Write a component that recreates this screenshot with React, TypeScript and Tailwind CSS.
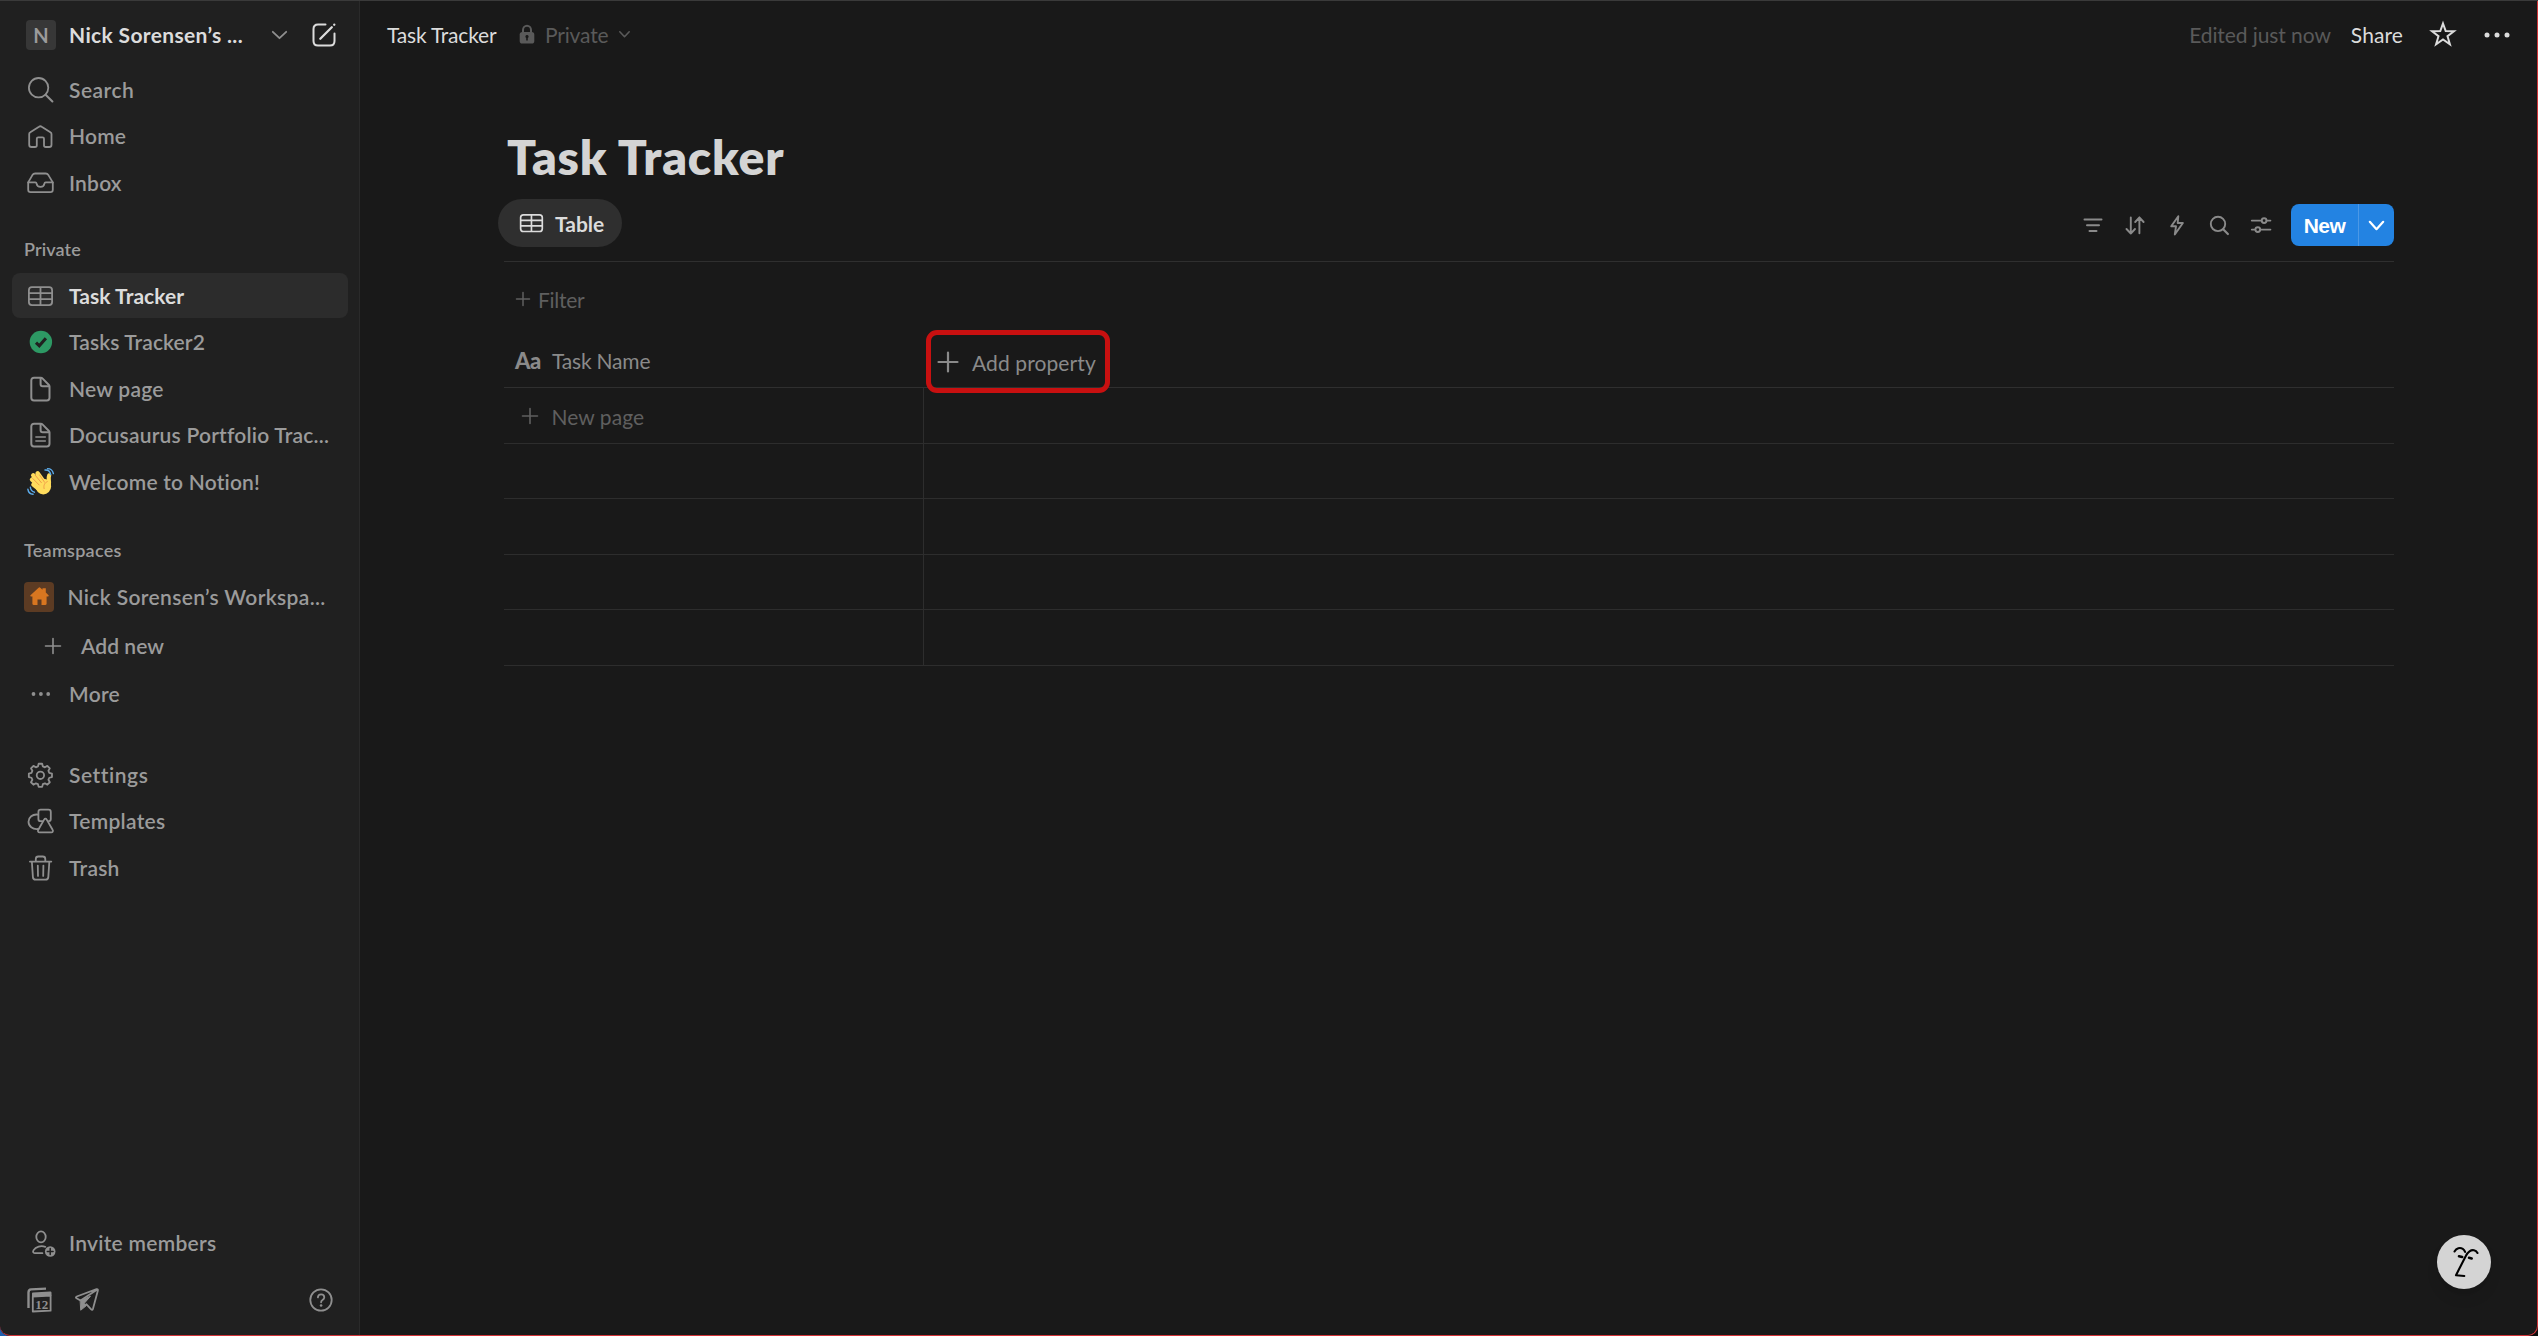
import React from "react";

type IconProps = { w?: number; h?: number; s?: number; className?: string; children: React.ReactNode };

function Icon({ w = 30, h = 30, s = 1.8, className = "", children }: IconProps) {
  return (
    <svg
      width={w}
      height={h}
      viewBox={`0 0 ${w} ${h}`}
      fill="none"
      stroke="currentColor"
      strokeWidth={s}
      strokeLinecap="round"
      strokeLinejoin="round"
      className={`block shrink-0 overflow-visible ${className}`}
    >
      {children}
    </svg>
  );
}

const SearchIcon = () => (
  <Icon>
    <circle cx="13.6" cy="12.7" r="9.7" />
    <path d="M20.6 19.8 27.4 26.4" strokeWidth="2.1" />
  </Icon>
);

const HomeIcon = () => (
  <Icon>
    <path d="M4.2 13.1c0-.9.4-1.5 1.1-1.9L14 5.7c.9-.6 1.8-.6 2.7 0l8.7 5.5c.7.4 1.1 1 1.1 1.9v10.6c0 1.4-.9 2.3-2.3 2.3h-3.4c-1.1 0-1.8-.7-1.8-1.8v-6.4c0-.9-.5-1.4-1.4-1.4h-4.4c-.9 0-1.4.5-1.4 1.4v6.4c0 1.1-.7 1.8-1.8 1.8H6.5c-1.4 0-2.3-.9-2.3-2.3z" />
  </Icon>
);

const InboxIcon = () => (
  <Icon>
    <path d="M3.2 14.4 7.4 7.1c.7-1.1 1.5-1.6 2.7-1.6h10.6c1.2 0 2 .5 2.7 1.6l4.4 7.3v7.4c0 1.4-1 2.4-2.4 2.4H5.6c-1.4 0-2.4-1-2.4-2.4z" />
    <path d="M3.2 14.4h7.1c.8 0 1.2.4 1.3 1.2.3 2 1.8 3.3 3.9 3.3s3.6-1.3 3.9-3.3c.1-.8.5-1.2 1.3-1.2h7.1" />
  </Icon>
);

const TableIcon = ({ w = 30, h = 30 }: { w?: number; h?: number }) => (
  <svg width={w} height={h} viewBox="0 0 30 30" fill="none" stroke="currentColor" strokeWidth="1.8" className="block shrink-0">
    <rect x="3.9" y="6.2" width="23.2" height="17.9" rx="3" />
    <path d="M4 12.2h23M4 18.1h23M15.5 6.4V24" />
  </svg>
);

const CheckIcon = () => (
  <Icon s={3.1} className="text-[#202020]">
    <circle cx="15.9" cy="15" r="11.2" fill="#2d9964" stroke="none" />
    <path d="m11 15.6 3.3 3.2 6.6-7.6" strokeLinecap="butt" strokeLinejoin="miter" />
  </Icon>
);

const PageIcon = ({ lines = false }: { lines?: boolean }) => (
  <Icon s={2}>
    <path d="M9 3.8h6.7c.8 0 1.4.2 2 .8l6 6.2c.6.6.8 1.1.8 1.9v11c0 1.7-1 2.7-2.7 2.7H9c-1.7 0-2.7-1-2.7-2.7V6.5c0-1.7 1-2.7 2.7-2.7z" />
    <path d="M15.6 4v6.2c0 1.3.7 2 2 2h6.6" />
    {lines && <path d="M10.900 17h9.400M10.900 21h9.400" strokeWidth="1.600" />}
  </Icon>
);

const WaveIcon = () => (
  <Icon>
    <g stroke="#ffdc5d" strokeWidth="4.4">
      <path d="M8.4 17.6 14 22M7 12.6l8 7M8.2 8.3l8.4 9M12.6 6.4l7.2 10" />
      <path d="M24.2 8.4c-1 2-.3 4.5-.2 7.2 0 4-1.8 7-4.4 8.4" strokeWidth="4.2" />
    </g>
    <circle cx="18.3" cy="19.6" r="7.8" fill="#ffdc5d" stroke="none" />
    <g stroke="#ee9547" strokeWidth="0.9">
      <path d="m7.7 11.5 6.5 6.5M10.2 8.2l6.2 7.5M14.6 8l5 7.3" />
      <path d="M22.3 14.6c-2.7 1.2-4 3.8-3.2 7" />
    </g>
    <g stroke="#5dadec" strokeWidth="1.4">
      <path d="M20 3c3-.2 5.2 1.7 5.7 4.6M22.5 1.6c3 0 5.3 2.1 5.9 5" />
      <path d="M5.4 20.2c.2 2.4 1.7 4.3 4 5M2.9 22.3c.4 2.8 2.3 4.7 5.2 5" />
    </g>
  </Icon>
);

const gearPath = (() => {
  const pts: string[] = [];
  const teeth = 8;
  for (let i = 0; i < teeth; i++) {
    const base = (i * 2 * Math.PI) / teeth - Math.PI / 2;
    [
      [-0.27, 9.2],
      [-0.15, 11.7],
      [0.15, 11.7],
      [0.27, 9.2],
    ].forEach(([da, r]) => {
      pts.push(`${(15.4 + r * Math.cos(base + da)).toFixed(2)} ${(15.3 + r * Math.sin(base + da)).toFixed(2)}`);
    });
  }
  return `M${pts.join("L")}Z`;
})();

const GearIcon = () => (
  <Icon>
    <path d={gearPath} />
    <circle cx="15.4" cy="15.3" r="3.7" />
  </Icon>
);

const TemplatesIcon = () => (
  <Icon>
    <path d="M12.8 8.6c-5.2-.7-9.3 2.8-9.3 7.2 0 4.3 4.1 7.9 9.6 7.2" />
    <path d="M17.4 15.2h-1.7c-1.5 0-2.3-.8-2.3-2.3V6c0-1.5.8-2.3 2.3-2.3h7.8c1.5 0 2.3.8 2.3 2.3v6.9c0 1.5-.6 2.1-1.9 2.3" />
    <path d="M19.1 13.6c.7-1.2 1.9-1.2 2.6 0l5.9 10.2c.8 1.3.2 2.5-1.3 2.5H14.6c-1.5 0-2.1-1.2-1.3-2.5z" />
  </Icon>
);

const TrashIcon = () => (
  <Icon>
    <path d="M4.9 8.6h21.4M6.9 9.2l1 14.9c.1 1.6 1.1 2.6 2.8 2.6h9.8c1.7 0 2.7-1 2.8-2.6l1-14.9M10.8 8.2V6c0-1.6.9-2.5 2.5-2.5h4.5c1.6 0 2.5.9 2.5 2.5v2.2" />
    <path d="m12.8 12.6.2 10.3M18.4 12.6l-.2 10.3" />
  </Icon>
);

const InviteIcon = () => (
  <Icon>
    <ellipse cx="16" cy="8.9" rx="4.7" ry="5.5" />
    <path d="M20.3 18.8c-4.3-1.5-9.5-.3-11.7 3.3-1 1.7-.5 3.1 1.2 3.1h7.6" />
    <circle cx="25.2" cy="23.5" r="5.3" fill="currentColor" stroke="none" />
    <path d="M25.2 20.6v5.8M22.3 23.5h5.800" stroke="#202020" strokeWidth="1.5" />
  </Icon>
);

const Plus = ({ size, s = 1.6 }: { size: number; s?: number }) => (
  <Icon w={size} h={size} s={s}>
    <path d={`M${size / 2} 0.5V${size - 0.5}M0.5 ${size / 2}H${size - 0.5}`} />
  </Icon>
);

const Chevron = ({ w, h, s = 1.8 }: { w: number; h: number; s?: number }) => (
  <Icon w={w} h={h} s={s}>
    <path d={`M0.8 0.8 ${w / 2} ${h - 0.8} ${w - 0.8} 0.8`} />
  </Icon>
);

function Row({
  icon,
  children,
  active = false,
  text,
}: {
  icon: React.ReactNode;
  children: React.ReactNode;
  active?: boolean;
  text: string;
}) {
  return (
    <div
      className={`ml-3 mr-[11px] flex h-[45px] items-center rounded-lg pl-[13px] ${active ? "bg-[#2c2c2c]" : ""}`}
    >
      <span className="text-[#8f8f8f]">{icon}</span>
      <span
        className={`ml-[14px] whitespace-nowrap pb-px text-[21px] leading-none ${
          active ? "font-bold text-[#dcdcdc]" : "font-semibold text-[#9b9b9b]"
        } ${text}`}
      >
        {children}
      </span>
    </div>
  );
}

function Sidebar() {
  return (
    <aside className="flex w-[360px] shrink-0 flex-col border-r border-[#2a2a2a] bg-[#202020]">
      <div className="mt-[11px] flex h-12 items-center pl-[26px]">
        <div className="flex h-[30px] w-[30px] items-center justify-center rounded bg-[#373737] text-[20px] font-bold text-[#9b9b9b]">
          N
        </div>
        <span className="ml-[13px] w-[190px] whitespace-nowrap pb-px text-[21px] font-bold leading-none tracking-[0.35px] text-[#dcdcdc]">
          Nick Sorensen’s ...
        </span>
        <span className="ml-[12.5px] text-[#8f8f8f]">
          <Chevron w={15} h={8} />
        </span>
        <span className="ml-[25.5px] text-[#dcdcdc]">
          <Icon w={24} h={24} s={2}>
            <path d="M13.5 1.5H6c-2.900 0-4.500 1.600-4.500 4.500v12c0 2.900 1.600 4.500 4.500 4.500h12c2.900 0 4.500-1.600 4.500-4.500v-7.500" />
            <path d="M8.300 15.700 19.800 4.200M22.200 1.700l.1-.1" strokeWidth="2.300" />
          </Icon>
        </span>
      </div>

      <nav className="mt-2 flex flex-col gap-[1.5px]">
        <Row icon={<SearchIcon />} text="tracking-[0.5px]">Search</Row>
        <Row icon={<HomeIcon />} text="tracking-[0.2px]">Home</Row>
        <Row icon={<InboxIcon />} text="tracking-[0.2px]">Inbox</Row>
      </nav>

      <div className="mt-[35px] flex h-[18px] items-center pl-6 text-[18px] font-semibold leading-none tracking-[0.1px] text-[#9b9b9b]">
        Private
      </div>
      <nav className="mt-[15px] flex flex-col gap-[1.5px]">
        <Row icon={<TableIcon />} active text="tracking-[0.05px]">Task Tracker</Row>
        <Row icon={<CheckIcon />} text="tracking-[0.1px]">Tasks Tracker2</Row>
        <Row icon={<PageIcon />} text="tracking-[0.25px]">New page</Row>
        <Row icon={<PageIcon lines />} text="tracking-[0.21px]">Docusaurus Portfolio Trac...</Row>
        <Row icon={<WaveIcon />} text="tracking-[0.2px]">Welcome to Notion!</Row>
      </nav>

      <div className="mt-[37px] flex h-[18px] items-center pl-6 text-[18px] font-semibold leading-none tracking-[0.25px] text-[#9b9b9b]">
        Teamspaces
      </div>
      <div className="mt-[15px] flex h-[45px] items-center pl-6">
        <div className="flex h-[30px] w-[30px] justify-center rounded bg-[#5c3b23] pt-[5px] text-[#d87620]">
          <svg width="19" height="18" viewBox="0 0 19 18" fill="currentColor" className="block">
            <path d="M8.6.7a1.300 1.300 0 0 1 1.700 0l2.200 2V1.200h3.300v4.400l2.700 2.600c.5.500.2 1.300-.5 1.300h-1.400v7.300c0 .7-.4 1.200-1.200 1.200h-3.900v-5.500h-4V18H3.600c-.8 0-1.200-.5-1.200-1.200V9.500H1C.3 9.500 0 8.700.5 8.200z" />
          </svg>
        </div>
        <span className="ml-[13.5px] whitespace-nowrap text-[21px] font-semibold leading-none tracking-[0.35px] text-[#9b9b9b]">
          Nick Sorensen’s Workspa...
        </span>
      </div>
      <div className="mt-1 flex h-[45px] items-center pl-[45px]">
        <span className="text-[#8f8f8f]"><Plus size={16} /></span>
        <span className="ml-5 pb-px text-[21px] font-semibold leading-none tracking-[0.05px] text-[#9b9b9b]">Add new</span>
      </div>
      <div className="mt-[3px]">
        <Row
          icon={
            <Icon>
              <g fill="currentColor" stroke="none">
                <circle cx="8.500" cy="15" r="1.900" />
                <circle cx="15.900" cy="15" r="1.900" />
                <circle cx="23.200" cy="15" r="1.900" />
              </g>
            </Icon>
          }
          text="tracking-[0.3px]"
        >
          More
        </Row>
      </div>

      <nav className="mt-9 flex flex-col gap-[1.5px]">
        <Row icon={<GearIcon />} text="tracking-[0.55px]">Settings</Row>
        <Row icon={<TemplatesIcon />} text="tracking-[0.3px]">Templates</Row>
        <Row icon={<TrashIcon />} text="tracking-[0.25px]">Trash</Row>
      </nav>

      <div className="mt-auto">
        <Row icon={<InviteIcon />} text="tracking-[0.28px]">Invite members</Row>
      </div>
      <div className="mb-[21px] mt-5 flex h-[30px] items-center pl-[26px] text-[#8f8f8f]">
        <svg width="26" height="26" viewBox="0 0 26 26" className="block overflow-visible">
          <path d="M2.500 21V5.500c0-2 .8-3 2.600-3.100L20 1.600" fill="none" stroke="currentColor" strokeWidth="2.400" />
          <path
            d="M6.800 9.500 24.600 8.500v15.200L6.800 24.500z"
            fill="none"
            stroke="currentColor"
            strokeWidth="1.800"
            strokeLinejoin="round"
          />
          <path d="M6 6.600c0-.8.4-1.200 1.200-1.200l16.800-.9c1 0 1.500.4 1.500 1.300v3L6 9.800z" fill="currentColor" />
          <text
            x="15.700"
            y="21.800"
            textAnchor="middle"
            fontSize="13"
            fontWeight="700"
            fill="currentColor"
            className="font-['Liberation_Serif',serif]"
          >
            12
          </text>
        </svg>
        <span className="ml-[23px]">
          <Icon w={24} h={24} s={1.8}>
            <path d="M22.900 2.400c.2-1-.3-1.500-1.300-1.200L1.700 8.500c-1 .4-1.100 1.200-.2 1.700l4 2.300L22.400 1.600M22.900 2.400l-5 18.600c-.3 1-1 1.200-1.700.4l-4.900-5.300" />
            <path d="M5.500 12.500 15.500 8.200 9.200 15.400 11.500 17.500 6 22z" fill="currentColor" strokeWidth="1" />
          </Icon>
        </span>
        <span className="ml-[210px]">
          <Icon w={24} h={24} s={1.8}>
            <circle cx="12" cy="12" r="10.700" />
            <path d="M8.900 9.400c.1-1.900 1.400-3.100 3.200-3.100s3.200 1.200 3.200 2.900c0 1.400-.8 2.100-1.800 2.800-1 .6-1.400 1.100-1.400 2.300" />
            <circle cx="12.100" cy="17.500" r="1.300" fill="currentColor" stroke="none" />
          </Icon>
        </span>
      </div>
    </aside>
  );
}

function TopBar() {
  return (
    <header className="flex h-[69px] items-center pl-[27px] pr-[28px] text-[21px] leading-none">
      <span className="pb-px tracking-[-0.2px] text-[#dcdcdc]">Task Tracker</span>
      <span className="ml-[22.5px] text-[#5a5a5a]">
        <svg width="16" height="20" viewBox="0 0 16 20" className="mb-0.5 block">
          <path d="M4 9V6a4 4.300 0 0 1 8 0v3" fill="none" stroke="currentColor" strokeWidth="2" />
          <rect x="0.700" y="8" width="14.600" height="11.500" rx="2.600" fill="currentColor" />
          <path d="M8 11a1.600 1.600 0 0 1 .8 3v2.400H7.200V14A1.600 1.600 0 0 1 8 11z" fill="#191919" />
        </svg>
      </span>
      <span className="ml-2.5 pb-px tracking-[-0.15px] text-[#5a5a5a]">Private</span>
      <span className="ml-[11px] text-[#5a5a5a]"><Chevron w={11} h={6.5} s={1.6} /></span>
      <span className="ml-auto pb-px tracking-[-0.08px] text-[#5a5a5a]">Edited just now</span>
      <span className="ml-5 pb-px tracking-[0.1px] text-[#dcdcdc]">Share</span>
      <span className="ml-[26px] text-[#dcdcdc]">
        <svg width="28" height="28" viewBox="0 0 28 28" fill="none" stroke="currentColor" strokeWidth="2" className="mb-px block">
          <path d="M14 3.500 16.700 11 25 11.200 18.500 16.200 20.900 24.200 14 19.400 7.100 24.200 9.500 16.200 3 11.200 11.300 11z" strokeLinejoin="miter" />
        </svg>
      </span>
      <span className="ml-[27px] text-[#dcdcdc]">
        <svg width="26" height="6" viewBox="0 0 26 6" fill="currentColor" className="block">
          <circle cx="3" cy="3" r="2.500" />
          <circle cx="13" cy="3" r="2.500" />
          <circle cx="23" cy="3" r="2.500" />
        </svg>
      </span>
    </header>
  );
}

function Toolbar() {
  return (
    <div className="flex items-center gap-3 text-[#8a8a8a]">
      <Icon s={2}>
        <path d="M6.500 9.500h17M9 15.200h12M11.500 21h7" />
      </Icon>
      <Icon s={1.9}>
        <path d="M10.800 7.500v16M6.500 19l4.300 4.500L15 19M19.400 23.300V7.500M15.200 12l4.200-4.500L23.600 12" />
      </Icon>
      <Icon s={1.9}>
        <path d="M16.300 6.200 9.200 16.300h4.800l-1.200 8.200L20.900 13h-5.200z" />
      </Icon>
      <Icon s={1.9}>
        <circle cx="14" cy="13.900" r="7.200" />
        <path d="m19.200 19.200 4.700 4.800" strokeWidth="2.200" />
      </Icon>
      <Icon s={1.9}>
        <path d="M5.800 10.600h9.700M20.700 10.600h3.700M5.800 19.600h3.300M14.300 19.600h10.100" />
        <circle cx="18.100" cy="10.600" r="2.400" />
        <circle cx="11.800" cy="19.600" r="2.400" />
      </Icon>
      <div className="ml-[3px] flex h-[42px] w-[103px] overflow-hidden rounded-lg bg-[#2383e2] text-white">
        <div className="flex w-[68px] items-center justify-center border-r border-[#4b98e6] font-['Liberation_Sans',sans-serif] text-[21px] font-bold leading-none tracking-[-0.6px]">
          New
        </div>
        <div className="flex flex-1 items-center justify-center pt-px">
          <Chevron w={15} h={9} s={2.2} />
        </div>
      </div>
    </div>
  );
}

function DatabaseTable() {
  return (
    <div className="flex flex-col text-[21px] leading-none">
      <div className="relative flex h-14 items-center border-b border-[#2f2f2f]">
        <div className="flex w-[420px] items-center pl-[11px] pt-0.5 text-[#8a8a8a]">
          <span className="w-[37px] text-[22px] font-black tracking-[-0.5px]">Aa</span>
          <span className="tracking-[-0.2px]">Task Name</span>
        </div>
        <div className="absolute left-[422px] top-[-2px] flex h-[63px] w-[184px] items-center rounded-[11px] border-[5px] border-[#c81010] pl-[7px] text-[#8a8a8a]">
          <Plus size={20} s={2.2} />
          <span className="ml-[14px] whitespace-nowrap pt-px tracking-[0.1px]">Add property</span>
        </div>
      </div>
      {[0, 1, 2, 3, 4].map((i) => (
        <div key={i} className={`flex border-b border-[#2d2d2d] ${i % 2 === 0 ? "h-[56px]" : "h-[55px]"}`}>
          <div className="flex w-[420px] items-center border-r border-[#2d2d2d] text-[#5f5f5f]">
            {i === 0 && (
              <>
                <span className="ml-[18px]"><Plus size={16} /></span>
                <span className="ml-[13.5px] pt-px tracking-[0.05px]">New page</span>
              </>
            )}
          </div>
        </div>
      ))}
    </div>
  );
}

export default function App() {
  return (
    <div className="relative h-[1336px] w-full overflow-hidden bg-linear-to-r from-[#1f5fae] to-[#0c0c0c]">
      <div className="flex h-full overflow-hidden rounded-b-[10px] bg-[#191919] font-['Lato','Open_Sans',sans-serif]">
        <Sidebar />
        <main className="flex min-w-0 flex-1 flex-col">
          <TopBar />
          <section className="mx-[144px] flex flex-col">
            <h1 className="mt-[60px] h-14 whitespace-nowrap pl-[3px] text-[48px] font-extrabold leading-[56px] tracking-[0.8px] text-[#d4d4d4]">
              Task Tracker
            </h1>
            <div className="mt-[13px] flex h-16 items-start justify-between border-b border-[#2f2f2f]">
              <div className="-ml-[6px] mt-px flex h-12 w-[124px] items-center rounded-full bg-[#2f2f2f] pl-[19px] text-[#dcdcdc]">
                <TableIcon w={28} h={28} />
                <span className="ml-2.5 pt-px text-[21px] font-bold leading-none">Table</span>
              </div>
              <div className="mt-[6px]">
                <Toolbar />
              </div>
            </div>
            <div className="mt-4 flex h-[42px] items-center pl-3 text-[21px] leading-none text-[#5f5f5f]">
              <Plus size={14} s={1.5} />
              <span className="ml-2 tracking-[-0.28px]">Filter</span>
            </div>
            <div className="mt-3">
              <DatabaseTable />
            </div>
          </section>
        </main>
      </div>

      {/* Floating assistant button */}
      <button className="absolute bottom-[47px] right-[47px] flex h-[54px] w-[54px] items-center justify-center rounded-full bg-[#d4d4d4] text-black shadow-lg">
        <svg width="54" height="54" viewBox="0 0 54 54" fill="none" stroke="currentColor" strokeWidth="2.1" strokeLinecap="round" strokeLinejoin="round" className="block">
          <path d="M17.500 16.500c2-3.400 5.500-4.300 8.300-2.600 1 .6 1.800 1.700 2.300 3" />
          <path d="M40.500 18c-1.700-3-5-3.700-8-1.700-1.500 1-2.700 2.600-3.700 4.700L19 40.200l8.300.8" />
          <path d="m22 21.300 3.200.7M32 22.800l2.700.6" strokeWidth="2.600" />
        </svg>
      </button>

      {/* Window frame */}
      <div className="pointer-events-none absolute inset-0 rounded-b-[10px] border-b border-r border-[#d13438]" />
      <div className="pointer-events-none absolute inset-x-0 top-0 h-px bg-[#3a3a3a]" />
    </div>
  );
}
